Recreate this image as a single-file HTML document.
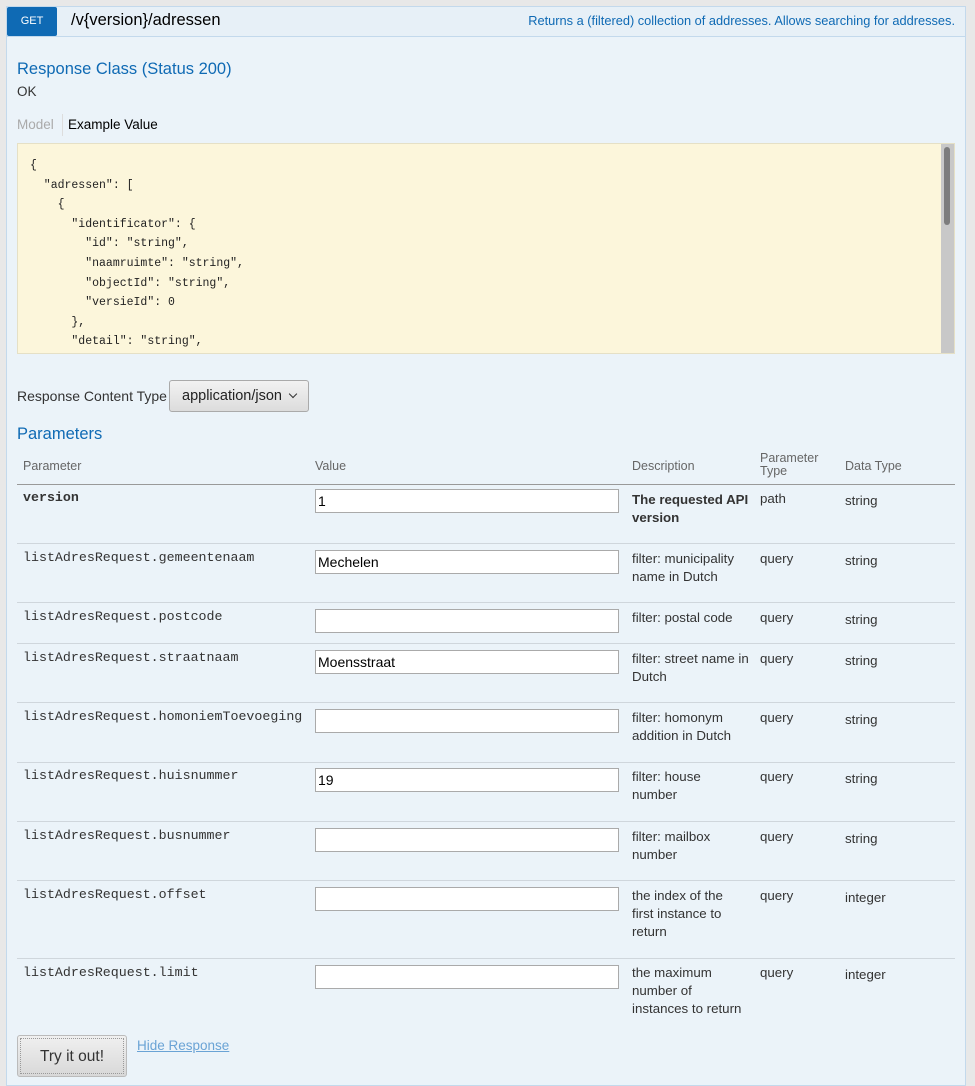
<!DOCTYPE html>
<html><head><meta charset="utf-8"><style>
*{box-sizing:border-box;margin:0;padding:0}
body{width:975px;height:1074px;background:#e8e8e8;font-family:"Liberation Sans",sans-serif;color:#333;position:relative;overflow:hidden}
.box{position:absolute;left:6px;top:6px;width:960px;height:1080px;background:#ebf3f9;border:1px solid #c3d9ec}
.hdr{position:absolute;left:6px;top:6px;width:960px;height:31px;background:#e7f0f7;border:1px solid #c3d9ec}
.get{position:absolute;left:7px;top:7px;width:50px;height:29px;background:#0f6ab4;color:#fff;font-size:11px;text-align:center;line-height:29px;border-radius:2px}
.a{position:absolute;white-space:nowrap}
.blue{color:#0f6ab4}
.code{position:absolute;left:17px;top:143px;width:938px;height:211px;background:#fcf6db;border:1px solid #e5e0c6;font-family:"Liberation Mono",monospace;font-size:11.5px;color:#222;padding:12px 0 0 12px;line-height:19.6px;white-space:pre;overflow:hidden}
.sb{position:absolute;left:941px;top:144px;width:13px;height:209px;background:#c8c8c8}
.sb div{position:absolute;left:3px;top:3px;width:6px;height:78px;background:#7d7d7d;border-radius:3px}
.line{position:absolute;left:17px;width:938px;height:1px;background:#cfd6dc}
.mono{font-family:"Liberation Mono",monospace;font-size:13.3px;color:#333}
.inp{position:absolute;left:315px;width:304px;height:24px;background:#fff;border:1px solid #aaa;font-size:14px;padding:3px 2px;color:#000}
.d{position:absolute;left:632px;font-size:13.3px;line-height:18px;white-space:nowrap}
.t{position:absolute;left:760px;font-size:13.3px}
.s{position:absolute;left:845px;font-size:13.3px}
.th{position:absolute;font-size:12.5px;color:#666}
</style></head><body>
<div class="box"></div>
<div class="hdr"></div>
<div class="get">GET</div>
<div class="a" style="left:71px;top:11px;font-size:16.5px;color:#000">/v{version}/adressen</div>
<div class="a blue" style="right:20px;top:13px;font-size:12.8px">Returns a (filtered) collection of addresses. Allows searching for addresses.</div>
<div class="a blue" style="left:17px;top:60px;font-size:16.5px">Response Class (Status 200)</div>
<div class="a" style="left:17px;top:84px;font-size:13.5px">OK</div>
<div class="a" style="left:17px;top:117px;font-size:13.5px;color:#aaa">Model</div>
<div class="a" style="left:62px;top:114px;width:1px;height:22px;background:#ddd"></div>
<div class="a" style="left:68px;top:117px;font-size:13.5px;color:#000">Example Value</div>
<div class="code">{
  "adressen": [
    {
      "identificator": {
        "id": "string",
        "naamruimte": "string",
        "objectId": "string",
        "versieId": 0
      },
      "detail": "string",</div>
<div class="sb"><div></div></div>
<div class="a" style="left:17px;top:388px;font-size:14px">Response Content Type</div>
<div class="a" style="left:169px;top:380px;width:140px;height:32px;border:1px solid #aaa;border-radius:3px;background:linear-gradient(#f2f2f2,#dcdcdc);font-size:14.5px;color:#222;padding:7px 0 0 12px">application/json <span style="display:inline-block;width:6px;height:6px;border-right:1.5px solid #333;border-bottom:1.5px solid #333;transform:rotate(45deg);margin:0 0 3px 4px"></span></div>
<div class="a blue" style="left:17px;top:425px;font-size:16.5px">Parameters</div>
<div class="th" style="left:23px;top:459px">Parameter</div>
<div class="th" style="left:315px;top:459px">Value</div>
<div class="th" style="left:632px;top:459px">Description</div>
<div class="th" style="left:760px;top:452px;line-height:13px">Parameter<br>Type</div>
<div class="th" style="left:845px;top:459px">Data Type</div>
<div class="line" style="top:484px;background:#999"></div>

<div class="a mono" style="left:23px;top:490px;font-weight:bold">version</div>
<div class="inp" style="top:489px">1</div>
<div class="d" style="top:491px;font-weight:bold">The requested API<br>version</div>
<div class="t" style="top:491px">path</div><div class="s" style="top:493px">string</div>
<div class="line" style="top:543px"></div>

<div class="a mono" style="left:23px;top:550px">listAdresRequest.gemeentenaam</div>
<div class="inp" style="top:550px">Mechelen</div>
<div class="d" style="top:550px">filter: municipality<br>name in Dutch</div>
<div class="t" style="top:551px">query</div><div class="s" style="top:553px">string</div>
<div class="line" style="top:602px"></div>

<div class="a mono" style="left:23px;top:609px">listAdresRequest.postcode</div>
<div class="inp" style="top:609px"></div>
<div class="d" style="top:609px">filter: postal code</div>
<div class="t" style="top:610px">query</div><div class="s" style="top:612px">string</div>
<div class="line" style="top:643px"></div>

<div class="a mono" style="left:23px;top:650px">listAdresRequest.straatnaam</div>
<div class="inp" style="top:650px">Moensstraat</div>
<div class="d" style="top:650px">filter: street name in<br>Dutch</div>
<div class="t" style="top:651px">query</div><div class="s" style="top:653px">string</div>
<div class="line" style="top:702px"></div>

<div class="a mono" style="left:23px;top:709px">listAdresRequest.homoniemToevoeging</div>
<div class="inp" style="top:709px"></div>
<div class="d" style="top:709px">filter: homonym<br>addition in Dutch</div>
<div class="t" style="top:710px">query</div><div class="s" style="top:712px">string</div>
<div class="line" style="top:762px"></div>

<div class="a mono" style="left:23px;top:768px">listAdresRequest.huisnummer</div>
<div class="inp" style="top:768px">19</div>
<div class="d" style="top:768px">filter: house<br>number</div>
<div class="t" style="top:769px">query</div><div class="s" style="top:771px">string</div>
<div class="line" style="top:821px"></div>

<div class="a mono" style="left:23px;top:828px">listAdresRequest.busnummer</div>
<div class="inp" style="top:828px"></div>
<div class="d" style="top:828px">filter: mailbox<br>number</div>
<div class="t" style="top:829px">query</div><div class="s" style="top:831px">string</div>
<div class="line" style="top:880px"></div>

<div class="a mono" style="left:23px;top:887px">listAdresRequest.offset</div>
<div class="inp" style="top:887px"></div>
<div class="d" style="top:887px">the index of the<br>first instance to<br>return</div>
<div class="t" style="top:888px">query</div><div class="s" style="top:890px">integer</div>
<div class="line" style="top:958px"></div>

<div class="a mono" style="left:23px;top:965px">listAdresRequest.limit</div>
<div class="inp" style="top:965px"></div>
<div class="d" style="top:964px">the maximum<br>number of<br>instances to return</div>
<div class="t" style="top:965px">query</div><div class="s" style="top:967px">integer</div>

<div class="a" style="left:17px;top:1035px;width:110px;height:42px;border:1px solid #bbb;border-radius:3px;background:linear-gradient(#f0f0f0,#d8d8d8)"><div style="position:absolute;left:2px;top:2px;right:2px;bottom:2px;border:1px dotted #999;text-align:center;font-size:15.5px;color:#333;padding-top:9px">Try it out!</div></div>
<div class="a" style="left:137px;top:1038px;font-size:13.5px;color:#6aa3d5;text-decoration:underline">Hide Response</div>
</body></html>
